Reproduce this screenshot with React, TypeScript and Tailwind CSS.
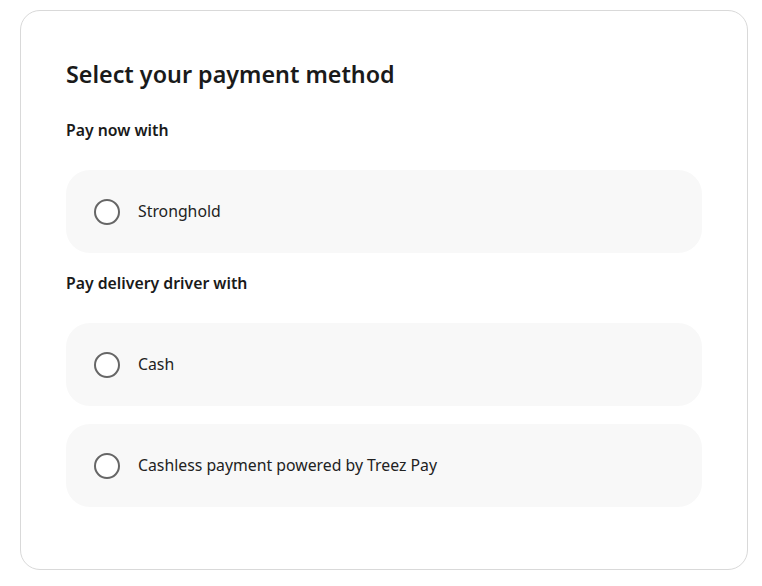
import { useState } from "react";

const GROUPS = [
  { label: "Pay now with", options: ["Stronghold"] },
  { label: "Pay delivery driver with", options: ["Cash", "Cashless payment powered by Treez Pay"] },
];

function Radio({ checked }: { checked: boolean }) {
  return (
    <span className="flex h-[26px] w-[26px] shrink-0 items-center justify-center rounded-full border-2 border-[#666666] bg-white">
      {checked && <span className="h-[12px] w-[12px] rounded-full bg-[#222222]" />}
    </span>
  );
}

export default function App() {
  const [selected, setSelected] = useState<string | null>(null);

  return (
    <div className="min-h-screen bg-white pl-[20px] pt-[10px]" style={{ fontFamily: '"Noto Sans", "Open Sans", sans-serif' }}>
      <div className="w-[728px] h-[560px] rounded-[20px] border border-[#d9d9d9] bg-white px-[45px] pt-[47px] text-[#1a1a1a]">
        <h1 className="text-[23.3px] leading-[32px] font-semibold">Select your payment method</h1>
        {GROUPS.map((g, gi) => (
          <div key={g.label} className={gi === 0 ? "mt-[28px]" : "mt-[18px]"}>
            <h2 className="text-[15.8px] leading-[24px] font-semibold">{g.label}</h2>
            <div className="mt-[28px] flex flex-col gap-[18px]">
              {g.options.map((o) => (
                <button
                  key={o}
                  onClick={() => setSelected(o)}
                  className="flex h-[83px] w-full items-center gap-[18px] rounded-[24px] bg-[#f8f8f8] pl-[28px] text-left text-[15.8px] text-[#222222]"
                >
                  <Radio checked={selected === o} />
                  <span>{o}</span>
                </button>
              ))}
            </div>
          </div>
        ))}
      </div>
    </div>
  );
}
